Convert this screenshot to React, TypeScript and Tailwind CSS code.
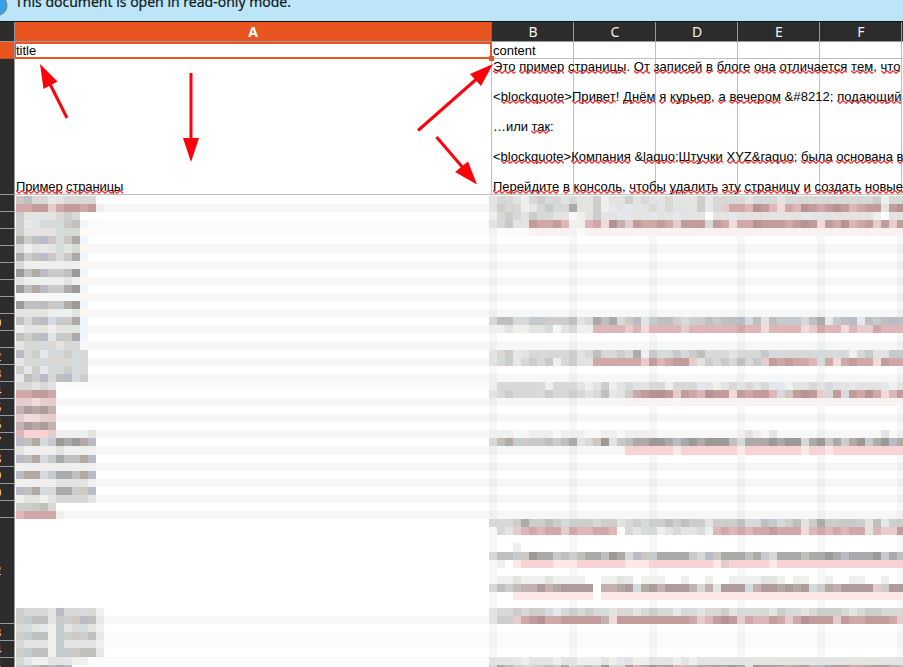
const SHADES: Record<string, string> = {
  a: "bg-[#efefee]", b: "bg-[#e3e3e2]", c: "bg-[#d8d8d6]", d: "bg-[#cdcdcc]",
  e: "bg-[#bfbfbd]", f: "bg-[#abaaaa]", g: "bg-[#9c9999]", h: "bg-[#e4e7ec]",
  i: "bg-[#d5dadd]", j: "bg-[#c4cace]", k: "bg-[#b9bbc6]", m: "bg-[#cdc8c2]",
  n: "bg-[#b3aaa4]", l: "bg-[#c3b0b1]", o: "bg-[#ae9c9c]", p: "bg-[#faf2f2]",
  q: "bg-[#eedbda]", r: "bg-[#e6cdcd]", s: "bg-[#dfb6b7]", t: "bg-[#d0a8a8]",
  u: "bg-[#c29b9b]", v: "bg-[#b69294]", w: "bg-[#fde7e7]", x: "bg-[#f9d2d3]",
  z: "bg-[#eff5fd]",
};

const P = (n: number, c: string) => c.repeat(n);

const LEFT: Record<number, string> = {
  0: "mecchbcccc", 1: "ttuurtuutua", 2: "dbbbbcdc", 3: "dhbicimez", 4: "dbbbbicc",
  5: "fdekmimfz", 6: "cabhbibc", 7: "fdekmimfz", 8: "caaaaaaa", 9: "genkmjegz",
  10: "baaaaaba", 11: "genkmjngz", 13: "geekmjngz", 14: "bbbbaaab", 15: "ecekijmfz",
  16: "abbbabbbz", 17: "edekbjmfz", 18: "bccicbcc", 19: "kcdhicdic", 20: "hccicccic",
  21: "dhdhicdic", 22: "hedkcekid", 23: "ccbcb", 24: "ttuut", 25: "rrqrr", 26: "lonol",
  27: "rqqrr", 28: "lonol", 29: "sxxxraaaab", 30: "kenijgfgnk", 31: "baaaabaaaa",
  32: "kenijfeenk", 33: "aaaaaaaaaa", 34: "knnijffenk", 35: "aaaaabbbba", 36: "kenicffdmk",
  37: "abbabccccb", 38: "ddmec", 39: "stttta", 51: "dcccbkccica", 52: "djeebjdmkeh",
  53: "cibhajbiiba", 54: "djeeajdmdeh", 55: "cbbbajbbbba", 56: "djeeajjmeeh",
  57: "chaabbhaa", 58: "djefkfk",
};

const RIGHT: Record<number, string> = {
  0: "bccbacdicbcbbdabbdbibbcbbb" + "dhccccbcicbcccccccccccdacc",
  1: "bdccahcjccfbbdahbhbbcbcbbb" + "dhcrttsvusqtsvutuvustuubuv",
  2: "acdcbdccbb.abdbbhhbbhbbhbb" + "b.bbhbbbbbbbbhbbbbbbbba.bb",
  3: "bcjbbuttusaastqvlruttutruu" + "uiutqttvuuutuvuqutvstururu",
  4: "....." + P(5, "p") + ".." + P(40, "p"),
  15: "ceeicjjdddebcfefimkbjeedid" + "dejeekiebejjjcefhjekhejeke",
  16: ".abaabbi.bcaassssrsqssssrs" + "ssssstssqssssqrtssqsrrtsss",
  19: "bcdhbcicccdbceccdcfajicjcd" + "eicibcccjciccciicicacjbbjj",
  20: "bidhcdcjacdbbttttttrustuur" + "bdcjcecjrututtsitqtuttqutt",
  23: "aciccciacccbabdabibbccaccc" + "hbabcbcbchhabbcbibbhbbbhab",
  24: "bidcccidccdcbcehbdtuvvurut" + "svuuqutuusimuvurcuiutvtqsu",
  25: P(17, ".") + P(6, "p") + "." + P(28, "p"),
  29: "aaa..aaa.aaa..aa.aaa......" + "......ba.b.............b..",
  30: "cenjdmjedefbcmgbjefnggfkfg" + "ngggecfnfgfggcfgmfdngjngkn",
  31: P(17, ".") + "xxxxxxwxx" + "xxxxxwxxxxxxxwxxwxxxxxxxxx",
  40: "cccdfddedidddcddbcdiddeded" + "dbdddeiiejidebdfddmjdbehdd",
  41: ".cbrststtrtsstts.cbicabcbb" + "iastststtutttqstststtbsrru",
  43: "...a......",
  44: "ceejmgffjedeffegfckmjffffj" + "ckmfffefjcfffeffgfkfffgjfek",
  45: ".a.wxxxxwwwxxxxxxwwwxxxxxx" + "xxwrxxxxxwxxxxxxxxxxxxxxxx",
  47: ".aabaaabaaaa..aabh.aaa..a." + ".a..aaaabba.aa..a..aa..a..",
  48: "cedellolnoooo.llnoinoloool" + "clboooiloononoidnloooordoo",
  49: "..." + P(10, "w") + "." + P(38, "w"),
  51: "bccdcddihcdcdcibccbcdcchci" + "bccdbciccbdcibcdddcbcddccc",
  52: "bddrtuvttuuuuulquuuuuuuuut" + "rsuvurtssutrtvuuuruttuuutr",
  57: "bbbhabbbabbaaabahbaabbbaba" + P(26, "b"),
  58: "cfedccdedfcdedgccosngnossk" + "nfofgnbgooflnoekfooltnoolk",
};

const BAND = [1, 6, 8, 10, 12, 14, 16, 18, 20, 22, 25, 27, 29, 31, 33, 35, 37, 39, 52];
const FAINT = [3, 4, 23, 54, 55, 57];
const TALL = [6, 18, 31, 43, 56];
const RULES = [0, 10, 20, 31, 41, 51];

function Strip({ codes, count, ruled }: { codes: string; count: number; ruled?: boolean }) {
  return (
    <div className="flex h-full shrink-0">
      {Array.from({ length: count }, (_, i) => {
        const rule = ruled && RULES.includes(i) ? "bg-black/[0.03]" : "";
        return <i key={i} className={`block h-full w-2 shrink-0 ${SHADES[codes[i]] ?? rule}`} />;
      })}
    </div>
  );
}

function Mosaic() {
  return (
    <div className="flex h-[472px] w-[888px] flex-col overflow-hidden pt-px">
      {Array.from({ length: 59 }, (_, r) => (
        <div
          key={r}
          className={`flex shrink-0 pl-px ${TALL.includes(r) ? "h-[9px]" : "h-2"} ${
            BAND.includes(r) ? "bg-[#f7f7f7]" : FAINT.includes(r) ? "bg-[#fbfbfb]" : "bg-white"
          }`}
        >
          <div className="h-full w-[473px] shrink-0">
            <Strip codes={LEFT[r] ?? ""} count={11} />
          </div>
          <Strip codes={RIGHT[r] ?? ""} count={52} ruled />
        </div>
      ))}
    </div>
  );
}

/** Text in which [bracketed] words carry the spell checker's wave. */
function Spelled({ text, className }: { text: string; className: string }) {
  return (
    <div className={`h-[15px] whitespace-pre leading-[15px] ${className}`}>
      {text.split(/(\[[^\]]*\])/).map((part, i) =>
        part.startsWith("[") ? (
          <span key={i} className="relative inline-block h-[15px]">
            {part.slice(1, -1)}
            <svg className="absolute left-0 top-[11px] h-1 w-full">
              <rect width="100%" height="4" fill="url(#wave)" />
            </svg>
          </span>
        ) : (
          part
        ),
      )}
    </div>
  );
}

const ROW_HEIGHTS: { n: number; h: string }[] = [
  { n: 2, h: "h-[136px]" },
  ...Array.from({ length: 19 }, (_, i) => ({ n: i + 3, h: "h-[17px]" })),
  { n: 22, h: "h-[106px]" },
  { n: 23, h: "h-[17px]" },
  { n: 24, h: "h-[17px]" },
  { n: 25, h: "h-[17px]" },
];

export default function App() {
  return (
    <div className="relative flex h-[667px] w-[903px] flex-col overflow-hidden bg-white font-['Liberation_Sans',Arial,sans-serif] text-[13px] text-black">
      <div className="relative h-[22px] shrink-0 overflow-hidden border-b border-[#101214] bg-[#bce5f7]">
        <svg className="absolute left-0 top-0" width="10" height="20">
          <circle cx="-3" cy="5.5" r="10" fill="#3b9fe6" stroke="#6d7f8c" />
        </svg>
        <div className="-mt-[9px] ml-[15px] whitespace-nowrap font-['Noto_Sans',sans-serif] text-[14px] leading-[22px] text-[#10181c] [-webkit-text-stroke:0.2px_#10181c]">
          This document is open in read-only mode.
        </div>
      </div>

      <div className="flex h-5 shrink-0 border-b border-[#999] bg-[#2c2c2c] text-center font-['Noto_Sans',sans-serif] text-[14px] leading-[20px] text-[#f2f2f2]">
        <div className="w-[15px] shrink-0 border-r border-[#999]" />
        <div className="w-[477px] shrink-0 border-r border-[#c9491f] bg-[#e95420] font-bold text-white">A</div>
        {["B", "C", "D", "E", "F"].map((c) => (
          <div key={c} className="w-[82px] shrink-0 border-r border-[#999] pl-px">
            {c}
          </div>
        ))}
      </div>

      <div className="flex min-h-0 flex-1">
        <div className="flex w-[15px] shrink-0 flex-col overflow-hidden border-r border-[#999] bg-[#2c2c2c] font-['Noto_Sans',sans-serif] text-[13px] text-[#f6dcc0]">
          <div className="h-[17px] shrink-0 border-b border-[#c9491f] bg-[#e95420]" />
          {ROW_HEIGHTS.map(({ n, h }) => (
            <div key={n} className={`flex shrink-0 items-center border-b border-[#999] ${h}`}>
              <span className="-ml-[14px] w-4 text-center leading-none">{n > 9 ? n : ""}</span>
            </div>
          ))}
        </div>

        <div className="relative flex w-[888px] shrink-0 flex-col">
          <div className="flex h-[17px] shrink-0">
            <div className="relative z-10 w-[477px] border-2 border-l border-[#e95420] bg-white leading-[14px]">
              title
              <i className="absolute -bottom-[4px] -right-[4px] block size-[5px] bg-[#e95420]" />
            </div>
            <div className="w-[82px] border-r border-b border-[#c0c0c0] pl-px leading-[17px]">content</div>
            {[0, 1, 2, 3].map((i) => (
              <div key={i} className="w-[82px] border-r border-b border-[#c0c0c0]" />
            ))}
            <div className="flex-1 border-b border-[#c0c0c0]" />
          </div>
          <div className="relative flex h-[136px] shrink-0 border-b border-[#c0c0c0]">
            <div className="flex w-[477px] items-end border-r border-[#c0c0c0] pl-px">
              <Spelled text="[Пример] [страницы]" className="tracking-[-0.12px]" />
            </div>
            {[0, 1, 2, 3, 4].map((i) => (
              <div key={i} className="w-[82px] border-r border-[#c0c0c0]" />
            ))}
            <div className="absolute left-[478px] top-0 flex w-[410px] flex-col gap-[15px] overflow-hidden">
              <Spelled className="tracking-[0.04px]" text="[Это] [пример] [страницы]. [От] [записей] [в] [блоге] [она] [отличается] [тем], [что]" />
              <Spelled className="tracking-[0.07px]" text={"<[blockquote]>[Привет]! [Днём] [я] [курьер], [а] [вечером] &#8212; [подающий]"} />
              <Spelled className="tracking-[-0.05px]" text="…или [так]:" />
              <Spelled className="tracking-[0.01px]" text={"<[blockquote]>[Компания] &[laquo];[Штучки] [XYZ&raquo]; [была] [основана] [в]"} />
              <Spelled className="tracking-[0.02px]" text="[Перейдите] [в] [консоль], [чтобы] [удалить] [эту] [страницу] [и] [создать] [новые]" />
            </div>
          </div>
          <Mosaic />
        </div>
      </div>

      <svg className="pointer-events-none absolute left-0 top-0 z-20" width="903" height="200">
        <defs>
          <pattern id="wave" width="6" height="4" patternUnits="userSpaceOnUse">
            <path d="M-1.500 2L0 .7L3 3.300L6 .7L7.500 2" fill="none" stroke="#ff2a2a" strokeWidth="1.200" />
          </pattern>
        </defs>
        <g stroke="#ff000a" strokeWidth="3">
          <path d="M48 80L67 118M191 73V140M418 130.500L476 79.500M436.500 137L464 169" />
        </g>
        <g fill="#ff000a">
          <path d="M40 64L57.500 81.500L43.500 89zM183 138H199L191 162zM493 64L470 74L481 86zM477 184.500L468 161.500L455 172z" />
        </g>
      </svg>
    </div>
  );
}
